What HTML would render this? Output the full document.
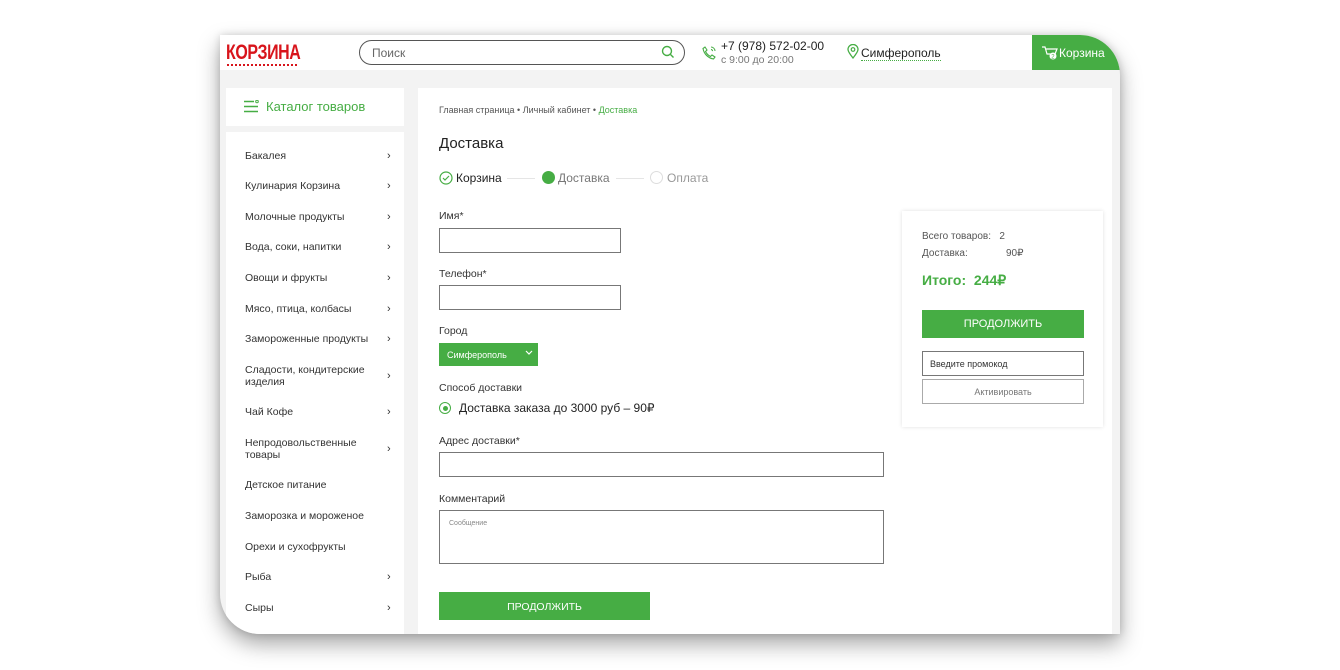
<!DOCTYPE html>
<html><head><meta charset="utf-8"><style>
*{box-sizing:border-box;margin:0;padding:0}
body{width:1340px;height:670px;background:#fff;font-family:"Liberation Sans",sans-serif;position:relative;overflow:hidden;color:#222}
.frame{position:absolute;left:220px;top:35px;width:900px;height:599px;background:#f3f3f3;border-radius:0 40px 0 40px;overflow:hidden;box-shadow:0 10px 22px rgba(0,0,0,.35),0 0 8px rgba(0,0,0,.15)}
.a{position:absolute}
.g{color:#46ad44}
.hdr{left:0;top:0;width:900px;height:35px;background:#fff}
.cat li{list-style:none;position:absolute;left:19px;font-size:10.5px;color:#333;width:128px;line-height:12px}
.cat li b{position:absolute;left:142px;top:0;font-weight:normal;font-size:11px}
.lbl{font-size:10.5px;color:#333}
.inp{border:1px solid #777;background:#fff}
.btn{background:#46ad44;color:#fff;font-size:11px;text-align:center}
</style></head><body>
<div class="frame">
 <div class="a hdr"></div>
 <div class="a" style="left:6px;top:6px;font:bold 21px 'Liberation Sans',sans-serif;color:#d8141b;letter-spacing:-0.5px;transform:scaleX(0.76);transform-origin:0 0">КОРЗИНА</div>
 <div class="a" style="left:7px;top:29px;width:70px;height:2px;border-top:2px dotted #d8141b"></div>
 <div class="a" style="left:139px;top:5px;width:326px;height:25px;border:1px solid #555;border-radius:13px;font-size:12px;color:#666;padding:5px 12px">Поиск</div>
 <svg class="a" style="left:441px;top:10px" width="14" height="14" viewBox="0 0 14 14"><circle cx="6" cy="6" r="4.5" fill="none" stroke="#46ad44" stroke-width="1.4"/><path d="M9.5 9.5l3 3" stroke="#46ad44" stroke-width="1.4"/></svg>
 <svg class="a" style="left:482px;top:10px" width="15" height="15" viewBox="0 0 15 15"><path d="M3 2l2 3-1.5 1.5c1 2 3 4 5 5L10 10l3 2-1.5 2C6 13 2 9 1 3.5z" fill="none" stroke="#46ad44" stroke-width="1.1"/><path d="M9 2a4 4 0 0 1 4 4M9 4.5a1.7 1.7 0 0 1 1.6 1.6" fill="none" stroke="#46ad44"/></svg>
 <div class="a" style="left:501px;top:4px;font-size:12px;color:#222">+7 (978) 572-02-00</div>
 <div class="a" style="left:501px;top:19px;font-size:10.5px;color:#777">с 9:00 до 20:00</div>
 <svg class="a" style="left:627px;top:9px" width="12" height="15" viewBox="0 0 12 15"><path d="M6 14C2 9 1 7 1 5.5a5 5 0 0 1 10 0C11 7 10 9 6 14z" fill="none" stroke="#46ad44" stroke-width="1.3"/><circle cx="6" cy="5.5" r="1.8" fill="none" stroke="#46ad44" stroke-width="1.2"/></svg>
 <div class="a" style="left:641px;top:11px;font-size:12px;color:#222;border-bottom:1px dotted #46ad44;line-height:14px">Симферополь</div>
 <div class="a" style="left:812px;top:0;width:88px;height:35px;background:#46ad44;color:#fff;font-size:12px;padding:11px 0 0 27px">Корзина</div>
 <svg class="a" style="left:821px;top:10px" width="18" height="16" viewBox="0 0 18 16"><path d="M1 2h3l2 7h8l2-5H5" fill="none" stroke="#fff" stroke-width="1.2"/><circle cx="12" cy="11" r="3.5" fill="#fff"/><text x="10.3" y="13.3" font-size="6" fill="#46ad44" font-family="Liberation Sans">2</text></svg>

 <div class="a" style="left:6px;top:53px;width:178px;height:38px;background:#fff"></div>
 <svg class="a" style="left:24px;top:65px" width="15" height="13" viewBox="0 0 15 13"><path d="M0 1.5h10M0 6.5h14M0 11.5h14" stroke="#46ad44" stroke-width="1.5"/><circle cx="13" cy="1.5" r="1.3" fill="none" stroke="#46ad44"/></svg>
 <div class="a g" style="left:46px;top:64px;font-size:13px">Каталог товаров</div>
 <div class="a" style="left:6px;top:97px;width:178px;height:520px;background:#fff">
  <ul class="cat">
   <li style="top:18px">Бакалея<b>›</b></li>
   <li style="top:48px">Кулинария Корзина<b>›</b></li>
   <li style="top:79px">Молочные продукты<b>›</b></li>
   <li style="top:109px">Вода, соки, напитки<b>›</b></li>
   <li style="top:140px">Овощи и фрукты<b>›</b></li>
   <li style="top:171px">Мясо, птица, колбасы<b>›</b></li>
   <li style="top:201px">Замороженные продукты<b>›</b></li>
   <li style="top:232px">Сладости, кондитерские изделия<b style="top:6px">›</b></li>
   <li style="top:274px">Чай Кофе<b>›</b></li>
   <li style="top:305px">Непродовольственные товары<b style="top:6px">›</b></li>
   <li style="top:347px">Детское питание</li>
   <li style="top:378px">Заморозка и мороженое</li>
   <li style="top:409px">Орехи и сухофрукты</li>
   <li style="top:439px">Рыба<b>›</b></li>
   <li style="top:470px">Сыры<b>›</b></li>
  </ul>
 </div>

 <div class="a" style="left:198px;top:53px;width:694px;height:560px;background:#fff"></div>
 <div class="a" style="left:219px;top:70px;font-size:9px;color:#555">Главная страница • Личный кабинет • <span class="g">Доставка</span></div>
 <div class="a" style="left:219px;top:100px;font-size:15px;color:#222">Доставка</div>
 <svg class="a" style="left:219px;top:136px" width="14" height="14"><circle cx="7" cy="7" r="6" fill="none" stroke="#46ad44" stroke-width="1.2"/><path d="M4 7l2 2 4-4" fill="none" stroke="#46ad44" stroke-width="1.2"/></svg>
 <div class="a" style="left:236px;top:136px;font-size:12px">Корзина</div>
 <div class="a" style="left:287px;top:143px;width:28px;border-top:1px solid #e5e5e5"></div>
 <div class="a" style="left:322px;top:136px;width:13px;height:13px;border-radius:50%;background:#46ad44"></div>
 <div class="a" style="left:338px;top:136px;font-size:12px;color:#777">Доставка</div>
 <div class="a" style="left:396px;top:143px;width:28px;border-top:1px solid #e5e5e5"></div>
 <div class="a" style="left:430px;top:136px;width:13px;height:13px;border-radius:50%;border:1px solid #ddd"></div>
 <div class="a" style="left:447px;top:136px;font-size:12px;color:#999">Оплата</div>

 <div class="a lbl" style="left:219px;top:175px">Имя*</div>
 <div class="a inp" style="left:219px;top:193px;width:182px;height:25px"></div>
 <div class="a lbl" style="left:219px;top:233px">Телефон*</div>
 <div class="a inp" style="left:219px;top:250px;width:182px;height:25px"></div>
 <div class="a lbl" style="left:219px;top:290px">Город</div>
 <div class="a btn" style="left:219px;top:308px;width:99px;height:23px;text-align:left;padding:7px 8px;font-size:9px">Симферополь</div>
 <svg class="a" style="left:305px;top:315px" width="8" height="6"><path d="M1 1l3 3 3-3" fill="none" stroke="#fff" stroke-width="1.2"/></svg>
 <div class="a lbl" style="left:219px;top:347px">Способ доставки</div>
 <div class="a" style="left:219px;top:367px;width:12px;height:12px;border-radius:50%;border:1.5px solid #46ad44"></div>
 <div class="a" style="left:222.5px;top:370.5px;width:5px;height:5px;border-radius:50%;background:#46ad44"></div>
 <div class="a" style="left:239px;top:366px;font-size:12px">Доставка заказа до 3000 руб – 90₽</div>
 <div class="a lbl" style="left:219px;top:400px">Адрес доставки*</div>
 <div class="a inp" style="left:219px;top:417px;width:445px;height:25px"></div>
 <div class="a lbl" style="left:219px;top:458px">Комментарий</div>
 <div class="a inp" style="left:219px;top:475px;width:445px;height:54px;font-size:7px;color:#888;padding:9px 9px">Сообщение</div>
 <div class="a btn" style="left:219px;top:557px;width:211px;height:28px;padding-top:9px;font-size:10.5px">ПРОДОЛЖИТЬ</div>

 <div class="a" style="left:682px;top:176px;width:201px;height:216px;background:#fff;box-shadow:0 0 4px rgba(0,0,0,.12)"></div>
 <div class="a" style="left:702px;top:196px;font-size:10px;color:#555">Всего товаров:&nbsp;&nbsp;&nbsp;2</div>
 <div class="a" style="left:702px;top:213px;font-size:10px;color:#555">Доставка:<span style="position:absolute;left:84px">90₽</span></div>
 <div class="a g" style="left:702px;top:237px;font-size:14px;font-weight:bold">Итого:&nbsp;&nbsp;244₽</div>
 <div class="a btn" style="left:702px;top:275px;width:162px;height:28px;padding-top:8px;font-size:11px">ПРОДОЛЖИТЬ</div>
 <div class="a inp" style="left:702px;top:316px;width:162px;height:25px;font-size:9px;color:#333;padding:7px 7px">Введите промокод</div>
 <div class="a" style="left:702px;top:344px;width:162px;height:25px;border:1px solid #aaa;font-size:9px;color:#777;text-align:center;padding-top:7px">Активировать</div>
</div>
</body></html>
